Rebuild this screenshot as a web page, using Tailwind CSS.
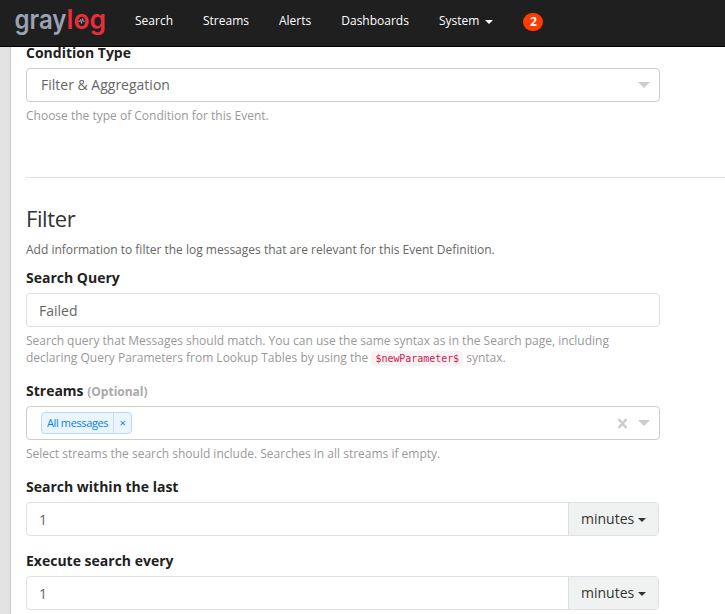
<!DOCTYPE html>
<html lang="en">
<head>
<meta charset="utf-8">
<title>Graylog</title>
<script src="https://cdn.jsdelivr.net/npm/@tailwindcss/browser@4"></script>
</head>
<body class="flex h-[614px] w-[725px] flex-col overflow-hidden bg-[#e3e3e3] font-['Open_Sans',sans-serif] text-xs text-[#666]">
<header class="z-10 flex h-[47px] shrink-0 items-start border-b border-black bg-[#1f1f1f] text-white">
  <svg class="ml-[10px] h-[46px] w-[100px] shrink-0" viewBox="10 0 100 46" role="img" aria-label="graylog">
    <g font-family="Inter, sans-serif" font-weight="600" font-size="27">
      <text x="14.500" y="28.500" fill="#9aa2b3" textLength="52" lengthAdjust="spacingAndGlyphs">gray</text>
      <text x="66.500" y="28.500" fill="#eb2d3a" textLength="39.500" lengthAdjust="spacingAndGlyphs">log</text>
    </g>
    <path d="M78.500 21.500h1l1-2 1 4 1-5 1 3h1" fill="none" stroke="#c5c9d2" stroke-width=".7"/>
  </svg>
  <nav class="ml-[25px] flex h-[41px] items-center gap-[30px] leading-[17px]">
    <a>Search</a><a>Streams</a><a>Alerts</a><a>Dashboards</a>
    <a class="flex items-center">System<i class="ml-1.5 mt-[3px] border-x-4 border-t-4 border-x-transparent border-t-white"></i></a>
    <span class="mt-[3px] flex h-[18px] w-5 items-center justify-center rounded-full bg-[#ff3b00] text-xs font-bold">2</span>
  </nav>
</header>
<main class="ml-[10px] min-h-0 flex-1 overflow-hidden border-l border-[#c9c9c9] bg-white pl-[15px]">
  <section class="-mt-1 h-[135px] border-b border-[#dfdfdf]">
    <label class="mb-[5px] block text-sm leading-5 font-bold text-[#1f1f1f]">Condition Type</label>
    <div class="flex h-[34px] w-[634px] items-center justify-between rounded border border-[#ccc] pr-[9px] pl-[14px] text-sm">
      <span>Filter &amp; Aggregation</span><i class="border-x-[6px] border-t-[6px] border-x-transparent border-t-[#ccc]"></i>
    </div>
    <p class="mt-[5px] leading-[17px] text-[#999]">Choose the type of Condition for this Event.</p>
  </section>
  <section>
    <h2 class="mt-[28px] text-[22px] leading-6 tracking-[-0.4px] text-[#333]">Filter</h2>
    <p class="mt-[11px] mb-[10px] leading-[17px]">Add information to filter the log messages that are relevant for this Event Definition.</p>
    <label class="mb-[5px] block text-sm leading-5 font-bold text-[#1f1f1f]">Search Query</label>
    <div class="flex h-[34px] w-[634px] items-center rounded border border-[#dde0e4] px-3 pt-px text-sm">Failed</div>
    <p class="mt-[5px] w-[634px] leading-[17px] text-[#999]">Search query that Messages should match. You can use the same syntax as in the Search page, including<br>declaring Query Parameters from Lookup Tables by using the <code class="rounded bg-[#f9f2f4] px-1 py-0.5 font-['DejaVu_Sans_Mono',monospace] text-[10px] tracking-[-0.05px] text-[#c7254e]">$newParameter$</code> syntax.</p>
    <label class="mt-[14px] mb-[5px] block text-sm leading-5 font-bold text-[#1f1f1f]">Streams <small class="text-xs text-[#aaa]">(Optional)</small></label>
    <div class="flex h-[34px] w-[634px] items-center rounded border border-[#ccc] pr-[9px] pl-[14px]">
      <div class="flex h-[22px] rounded-sm border border-[#b9d9ff] bg-[#ebf5ff] text-[11px] leading-5 text-[#007eff]"><span class="px-[5px] tracking-[-0.38px]">All messages</span><span class="w-[18px] border-l border-[#c2e0ff] text-center">×</span></div>
      <svg class="mr-2.5 ml-auto size-[11px]" viewBox="0 0 11 11"><path d="M1.500 1l8 9m0-9l-8 9" stroke="#ccc" stroke-width="2.500"/></svg>
      <i class="border-x-[6px] border-t-[6px] border-x-transparent border-t-[#ccc]"></i>
    </div>
    <p class="mt-[5px] leading-[17px] text-[#999]">Select streams the search should include. Searches in all streams if empty.</p>
    <label class="mt-[15px] mb-[5px] block text-sm leading-5 font-bold text-[#1f1f1f]">Search within the last</label>
    <div class="flex h-[34px] w-[633px] rounded border border-[#dde0e4] text-sm leading-8">
      <span class="flex-1 pt-px pl-3">1</span><span class="flex w-[90px] items-center rounded-r border-l border-[#dde0e1] bg-[#f0f2f2] pl-3 text-[#333]">minutes<i class="mt-0.5 ml-1 border-x-4 border-t-4 border-x-transparent border-t-[#333]"></i></span>
    </div>
    <label class="mt-[15px] mb-[5px] block text-sm leading-5 font-bold text-[#1f1f1f]">Execute search every</label>
    <div class="flex h-[34px] w-[633px] rounded border border-[#dde0e4] text-sm leading-8">
      <span class="flex-1 pt-px pl-3">1</span><span class="flex w-[90px] items-center rounded-r border-l border-[#dde0e1] bg-[#f0f2f2] pl-3 text-[#333]">minutes<i class="mt-0.5 ml-1 border-x-4 border-t-4 border-x-transparent border-t-[#333]"></i></span>
    </div>
  </section>
</main>
</body>
</html>
